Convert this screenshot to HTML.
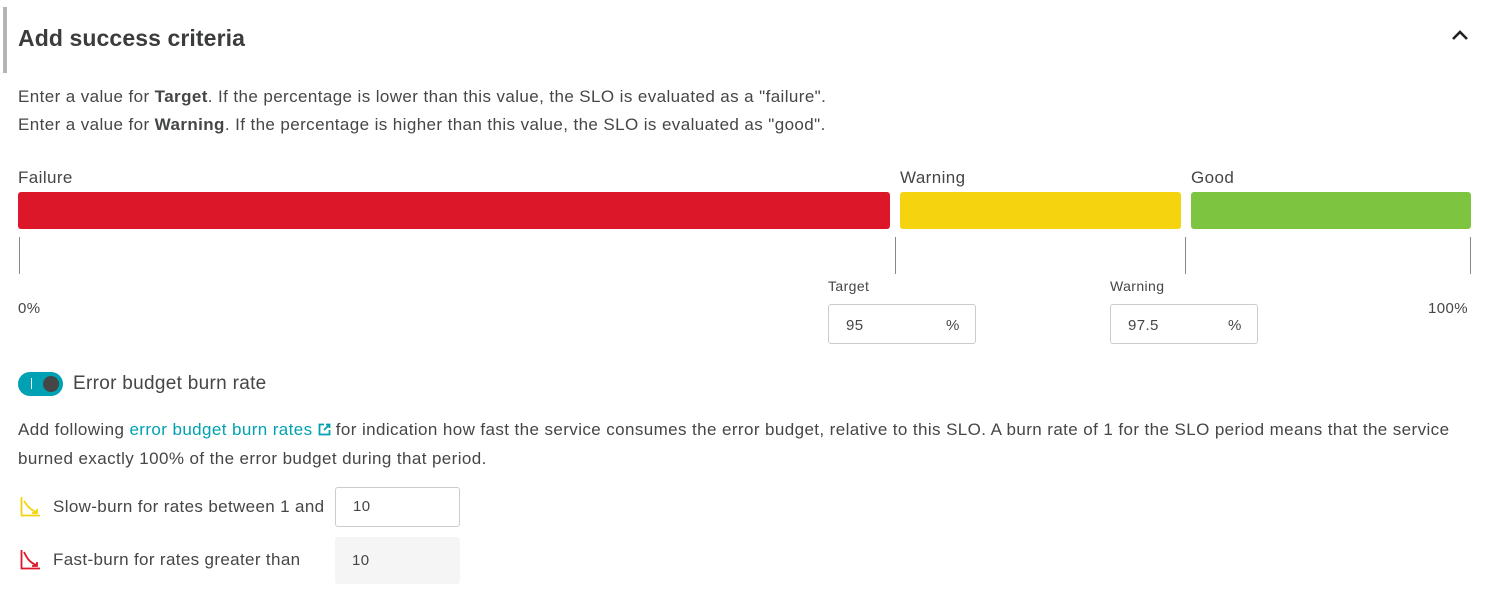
<!DOCTYPE html>
<html><head><style>
*{margin:0;padding:0;box-sizing:border-box}
body{width:1485px;height:594px;background:#fff;font-family:"Liberation Sans",sans-serif;color:#454646;position:relative;overflow:hidden;font-size:17px;letter-spacing:0.4px}
.a{position:absolute;white-space:nowrap}
.bar{position:absolute;height:37px;top:192px;border-radius:3px}
.tick{position:absolute;width:1px;background:#888;top:237px;height:37px}
.inp{position:absolute;border:1px solid #ccc;border-radius:3px;height:40px;font-size:15px;padding:12px 0 0 17px}
</style></head><body>
<div class="a" style="left:3px;top:7px;width:4px;height:66px;background:#b4b4b4"></div>
<div class="a" style="left:18px;top:25px;font-size:23px;font-weight:bold;color:#3b3c3c;letter-spacing:0.1px">Add success criteria</div>
<svg class="a" style="left:1451px;top:29px" width="18" height="12" viewBox="0 0 18 12"><path d="M2 10 L9 3 L16 10" stroke="#222" stroke-width="2.6" fill="none"/></svg>
<div class="a" style="left:18px;top:87px">Enter a value for <b>Target</b>. If the percentage is lower than this value, the SLO is evaluated as a "failure".</div>
<div class="a" style="left:18px;top:115px">Enter a value for <b>Warning</b>. If the percentage is higher than this value, the SLO is evaluated as "good".</div>
<div class="a" style="left:18px;top:168px">Failure</div>
<div class="a" style="left:900px;top:168px">Warning</div>
<div class="a" style="left:1191px;top:168px">Good</div>
<div class="bar" style="left:18px;width:872px;background:#dc172a"></div>
<div class="bar" style="left:900px;width:281px;background:#f5d30f"></div>
<div class="bar" style="left:1191px;width:280px;background:#7dc540"></div>
<div class="tick" style="left:19px"></div><div class="tick" style="left:895px"></div><div class="tick" style="left:1185px"></div><div class="tick" style="left:1470px"></div>
<div class="a" style="left:18px;top:300px;font-size:15px">0%</div>
<div class="a" style="left:1428px;top:300px;font-size:15px">100%</div>
<div class="a" style="left:828px;top:278px;font-size:14px">Target</div>
<div class="a" style="left:1110px;top:278px;font-size:14px">Warning</div>
<div class="inp" style="left:828px;top:304px;width:148px">95<span style="position:absolute;left:117px">%</span></div>
<div class="inp" style="left:1110px;top:304px;width:148px">97.5<span style="position:absolute;left:117px">%</span></div>
<div class="a" style="left:18px;top:372px;width:45px;height:24px;border-radius:12px;background:#00a1b2"></div>
<div class="a" style="left:31px;top:378px;width:1px;height:11px;background:#fff"></div>
<div class="a" style="left:43px;top:376px;width:16px;height:16px;border-radius:50%;background:#454646"></div>
<div class="a" style="left:73px;top:373px;font-size:19px;letter-spacing:0.3px">Error budget burn rate</div>
<div class="a" style="left:18px;top:420px">Add following <span style="color:#00a1b2">error budget burn rates</span> <svg width="13" height="13" viewBox="0 0 13 13" style="vertical-align:-1px"><path d="M6 1.5H1.5V11.5H11.5V7M8 1.5H11.5V5M11.5 1.5L6 7" stroke="#00a1b2" stroke-width="1.8" fill="none"/></svg> for indication how fast the service consumes the error budget, relative to this SLO. A burn rate of 1 for the SLO period means that the service</div>
<div class="a" style="left:18px;top:449px">burned exactly 100% of the error budget during that period.</div>
<svg class="a" style="left:20px;top:497px" width="21" height="20" viewBox="0 0 21 20"><path d="M1.5 0V18.5H20" stroke="#f5d30f" stroke-width="1.8" fill="none"/><path d="M4 4C7 8 9 12 16 15M12 16H17V12" stroke="#f5d30f" stroke-width="1.8" fill="none"/></svg>
<div class="a" style="left:53px;top:497px;font-size:17px;letter-spacing:0.35px">Slow-burn for rates between 1 and</div>
<div class="inp" style="left:335px;top:487px;width:125px;height:40px;padding-top:10px">10</div>
<svg class="a" style="left:20px;top:550px" width="21" height="20" viewBox="0 0 21 20"><path d="M1.5 0V18.5H20" stroke="#dc172a" stroke-width="1.8" fill="none"/><path d="M4 2C7 8 9 12 16 15M12 16H17V12" stroke="#dc172a" stroke-width="1.8" fill="none"/></svg>
<div class="a" style="left:53px;top:550px;font-size:17px;letter-spacing:0.35px">Fast-burn for rates greater than</div>
<div class="inp" style="left:335px;top:537px;width:125px;height:47px;border:none;background:#f5f5f5;padding-top:15px">10</div>
</body></html>
